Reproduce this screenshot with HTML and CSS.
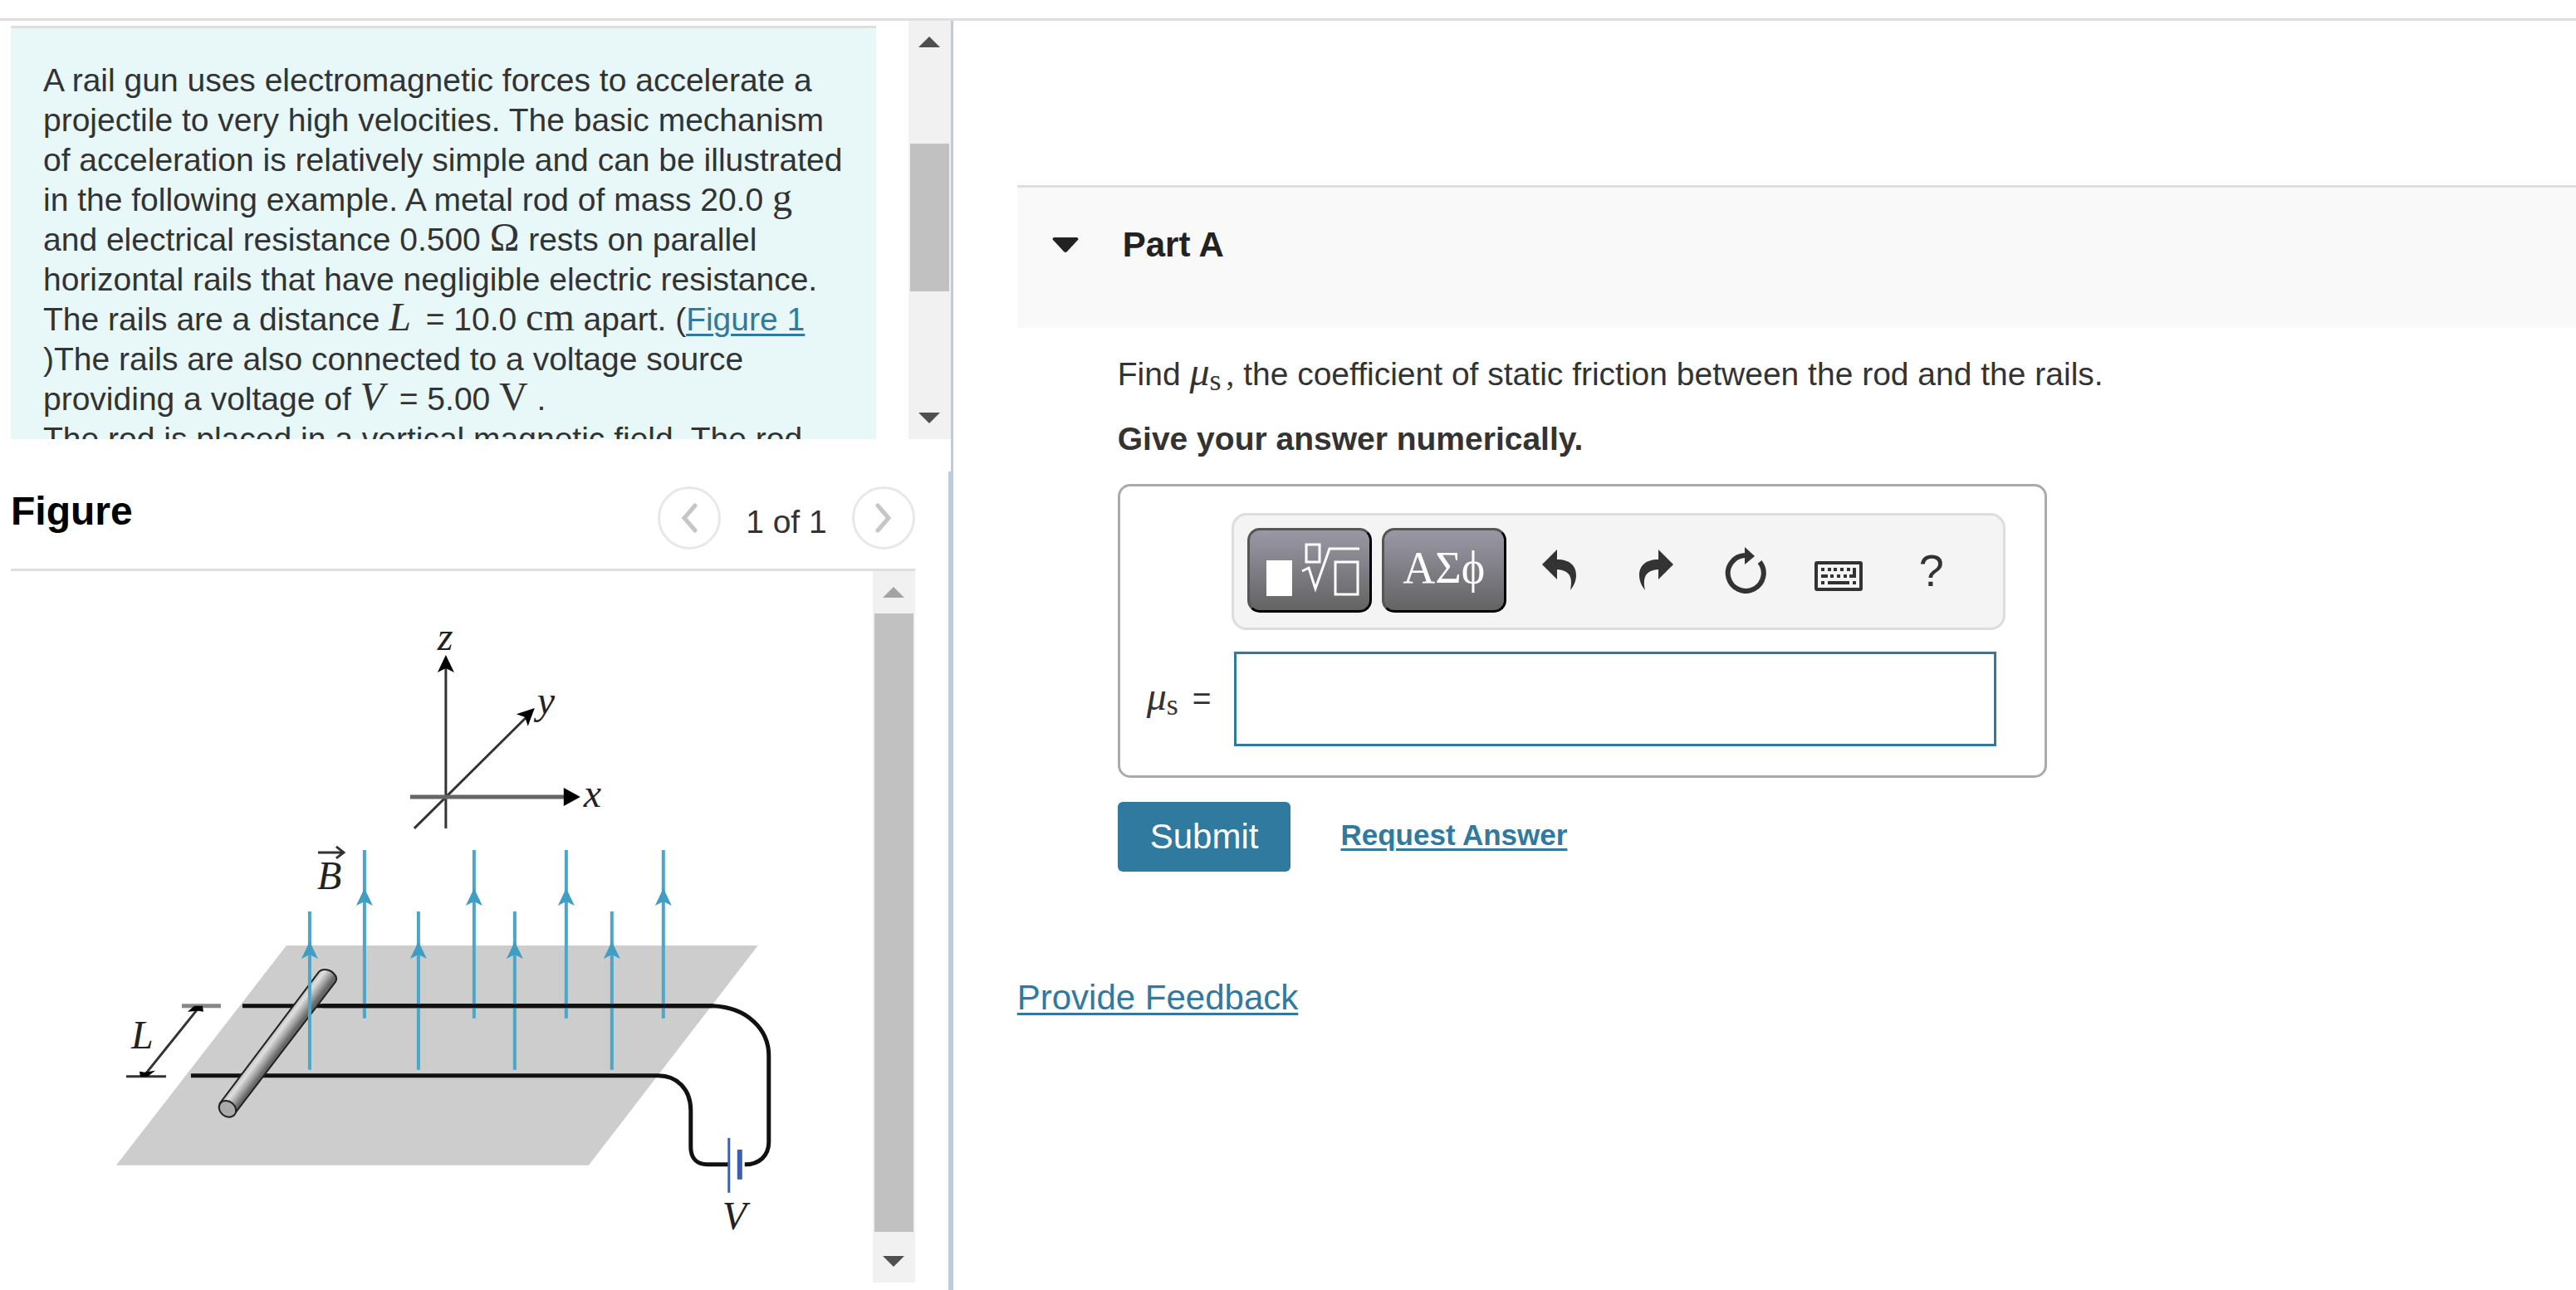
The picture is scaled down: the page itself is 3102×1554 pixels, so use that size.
FILE: index.html
```html
<!DOCTYPE html>
<html lang="en">
<head>
    <meta charset="UTF-8">
    <meta name="viewport" content="width=device-width, initial-scale=1.0">
    <title>Rail Gun - Part A</title>
    <link rel="stylesheet" href="styles.css">
</head>
<body>
    <header class="topbar"></header>
    <div class="container">
        <aside class="left">
            <section class="intro">
                <div class="intro-text">
                    <p>A rail gun uses electromagnetic forces to accelerate a projectile to very high velocities. The basic mechanism of acceleration is relatively simple and can be illustrated in the following example. A metal rod of mass 20.0 <span class="math">g</span> and electrical resistance 0.500 <span class="math">Ω</span> rests on parallel horizontal rails that have negligible electric resistance. The rails are a distance <i class="math">L</i> = 10.0 <span class="math">cm</span> apart. (<a href="#figure">Figure 1</a><br>)The rails are also connected to a voltage source providing a voltage of <i class="math">V</i> = 5.00 <span class="math">V</span> .</p>
                    <p>The rod is placed in a vertical magnetic field. The rod</p>
                </div>
                <div class="scrollbar">
                    <span class="arrow up"></span>
                    <div class="track"><div class="thumb"></div></div>
                    <span class="arrow down"></span>
                </div>
            </section>

            <section class="figure" id="figure">
                <div class="figure-header">
                    <h2>Figure</h2>
                    <div class="pager">
                        <button type="button" aria-label="Previous figure">
                            <svg width="20" height="36" viewBox="0 0 20 36"><path d="M17 3L4 18L17 33"/></svg>
                        </button>
                        <span>1 of 1</span>
                        <button type="button" aria-label="Next figure">
                            <svg width="20" height="36" viewBox="0 0 20 36"><path d="M3 3L16 18L3 33"/></svg>
                        </button>
                    </div>
                </div>
                <div class="figure-body">
                    <svg class="diagram" viewBox="13 688 1038 857" preserveAspectRatio="xMinYMin meet">
                        <defs>
                            <linearGradient id="rod" gradientUnits="userSpaceOnUse" x1="325" y1="1248" x2="341" y2="1260">
                                <stop offset="0" stop-color="#b8b8b8"/>
                                <stop offset="0.3" stop-color="#e0e0e0"/>
                                <stop offset="0.6" stop-color="#b0b0b0"/>
                                <stop offset="1" stop-color="#666"/>
                            </linearGradient>
                            <path id="head" d="M0 0L10 21L0 16L-10 21Z"/>
                        </defs>

                        <!-- axes -->
                        <g class="axis">
                            <path d="M537 998V800"/>
                            <path d="M499 998L636 862"/>
                            <path class="thick" d="M494 960H685"/>
                        </g>
                        <use href="#head" transform="translate(537 789)"/>
                        <use href="#head" transform="translate(644 853) rotate(46)"/>
                        <path d="M699 960L679 949V971Z"/>
                        <text x="527" y="783">z</text>
                        <text x="647" y="860">y</text>
                        <text x="703" y="972">x</text>

                        <!-- plate and rails -->
                        <path class="plate" d="M345 1139H913L709 1404H140Z"/>
                        <path class="wire" d="M292 1212H859C900 1214 926 1240 926 1272V1376C926 1392 915 1403 897 1403"/>
                        <path class="wire" d="M230 1296H793C815 1296 832 1312 832 1338V1382C832 1396 840 1403 852 1403H877"/>

                        <!-- rod -->
                        <path class="rod" d="M265 1329L384 1171C387 1167 395 1167 400 1171C406 1176 406 1180 404 1183L284 1340Z"/>
                        <ellipse class="rod-end" cx="274" cy="1336" rx="11" ry="9" transform="rotate(40 274 1336)"/>

                        <!-- magnetic field -->
                        <g class="field">
                            <path d="M439 1024V1227M571 1024V1227M682 1024V1227M799 1024V1227"/>
                            <path d="M373 1098V1289M504 1098V1289M620 1098V1289M737 1098V1289"/>
                        </g>
                        <g class="field-heads">
                            <use href="#head" x="439" y="1070"/>
                            <use href="#head" x="571" y="1070"/>
                            <use href="#head" x="682" y="1070"/>
                            <use href="#head" x="799" y="1070"/>
                            <use href="#head" x="373" y="1134"/>
                            <use href="#head" x="504" y="1134"/>
                            <use href="#head" x="620" y="1134"/>
                            <use href="#head" x="737" y="1134"/>
                        </g>
                        <path class="front" d="M388 1212H859"/>
                        <path class="axis" d="M383 1027H413M405 1020L414 1027L405 1034"/>
                        <text x="382" y="1071">B</text>

                        <!-- distance L -->
                        <path class="bar" d="M219 1212H266"/>
                        <path class="axis" d="M152 1297H200M176 1293L237 1217"/>
                        <path d="M244 1212L245 1219L239 1218L226 1219L234 1212Z"/>
                        <path d="M169 1297L168 1291L174 1292L187 1290L178 1297Z"/>
                        <text x="158" y="1263">L</text>

                        <!-- battery -->
                        <path class="battery" d="M878 1371V1437"/>
                        <path class="battery short" d="M891 1385V1421"/>
                        <text x="870" y="1481">V</text>
                    </svg>
                    <div class="scrollbar full">
                        <span class="arrow up off"></span>
                        <div class="track"><div class="thumb"></div></div>
                        <span class="arrow down"></span>
                    </div>
                </div>
            </section>
        </aside>

        <main class="right">
            <div class="part-header">
                <svg width="32" height="18" viewBox="0 0 32 18"><path d="M2 0H30Q33 2 30 4L18 17Q16 19 14 17L2 4Q-1 2 2 0Z"/></svg>
                <h2>Part A</h2>
            </div>
            <form class="part-body">
                <p>Find <span class="math"><i>μ</i><sub>s</sub></span><span class="comma">,</span> the coefficient of static friction between the rod and the rails.</p>
                <p><b>Give your answer numerically.</b></p>
                <div class="answer">
                    <div class="toolbar">
                        <button type="button" class="dark" aria-label="Templates">
                            <svg width="112" height="66" viewBox="0 0 112 66">
                                <path fill="#fff" stroke="none" d="M0 21H31V64H0Z"/>
                                <path d="M48 2H64V23H48ZM83 23H110V62H83Z"/>
                                <path d="M43 34L51 30L59 55L76 7H112"/>
                            </svg>
                        </button>
                        <button type="button" class="dark">ΑΣϕ</button>
                        <div class="tools">
                            <button type="button" aria-label="Undo">
                                <svg width="42" height="50" viewBox="0 0 42 50"><path d="M0 18L18 0V12C34 12 41 20 41 31C41 38 38 44 34 49C37 34 34 25 18 24V36Z"/></svg>
                            </button>
                            <button type="button" aria-label="Redo">
                                <svg class="redo" width="50" height="50" viewBox="0 0 50 50"><path d="M50 18L32 0V12C16 12 9 20 9 31C9 38 12 44 16 49C13 34 16 25 32 24V36Z"/></svg>
                            </button>
                            <button type="button" aria-label="Reset">
                                <svg width="50" height="56" viewBox="0 0 50 56"><path class="ring" d="M24 10A21.500 21.500 0 1 0 42 18"/><path d="M24 0L36 11L24 21Z"/></svg>
                            </button>
                            <button type="button" aria-label="Keyboard shortcuts">
                                <svg class="keys" width="58" height="36" viewBox="0 0 58 36"><path fill-rule="evenodd" d="M3 0H55Q58 0 58 3V33Q58 36 55 36H3Q0 36 0 33V3Q0 0 3 0ZM4 4V32H54V4ZM8 8H12V12H8ZM16 8H20V12H16ZM23 8H27V12H23ZM31 8H35V12H31ZM39 8H43V12H39ZM46 8H50V20H42V16H46ZM8 16H16V20H8ZM19 16H23V20H19ZM27 16H31V20H27ZM35 16H39V20H35ZM8 24H12V28H8ZM16 24H42V28H16ZM46 24H50V28H46Z"/></svg>
                            </button>
                            <button type="button" aria-label="Help">?</button>
                        </div>
                    </div>
                    <label for="mu"><span class="math"><i>μ</i><sub>s</sub></span> =</label>
                    <input type="text" id="mu" name="mu">
                </div>
                <div class="actions">
                    <button type="submit">Submit</button>
                    <a href="#">Request Answer</a>
                </div>
            </form>
            <a class="feedback" href="#">Provide Feedback</a>
        </main>
    </div>
</body>
</html>
```
FILE: styles.css
```css
* {
    box-sizing: border-box;
}
body {
    margin: 0;
    font-family: "Liberation Sans", Arial, sans-serif;
    font-size: 39px;
    line-height: 48px;
    color: #333;
    background: #fff;
}
h2, p {
    margin: 0;
}
button {
    font-family: inherit;
    cursor: pointer;
}
a {
    color: #30799f;
    text-underline-offset: 4px;
    text-decoration-thickness: 3px;
}
.topbar {
    height: 25px;
    border-bottom: 3px solid #dedede;
}
.container {
    display: grid;
    grid-template-columns: 37% 1fr;
    min-height: calc(100vh - 25px);
}
.math, .comma {
    font-family: "Liberation Serif", "Times New Roman", serif;
    font-size: 48px;
    line-height: 40px;
}
i.math {
    margin-right: 7px;
}
.math sub {
    font-size: 36px;
    line-height: 24px;
    vertical-align: -6px;
}
.comma {
    font-size: 39px;
    margin-left: 6px;
}

/* left column */
.left {
    display: flex;
    flex-direction: column;
}
.intro {
    display: flex;
    gap: 39px;
    padding: 0 0 39px 13px;
    border-right: 3px solid #bccbdf;
}
.intro-text {
    flex: 1;
    height: 498px;
    margin-top: 6px;
    padding: 39px 36px 0 39px;
    border-top: 3px solid #dedede;
    background: #e8f7f7;
    overflow: hidden;
}
.scrollbar {
    display: flex;
    flex-direction: column;
    width: 51px;
    background: #f1f1f1;
}
.arrow {
    display: flex;
    align-items: center;
    justify-content: center;
    height: 51px;
}
.arrow::before {
    content: "";
    border: 13px solid transparent;
}
.arrow.up::before {
    border-top: 0;
    border-bottom-color: #505050;
}
.arrow.down::before {
    border-bottom: 0;
    border-top-color: #505050;
}
.arrow.off::before {
    border-bottom-color: #a3a3a3;
}
.track {
    flex: 1;
    padding: 97px 2px 0;
}
.thumb {
    height: 178px;
    background: #c1c1c1;
}
.full .track {
    padding: 0 2px 10px;
}
.full .thumb {
    height: 100%;
}

/* figure */
.figure {
    flex: 1;
    padding: 0 40px 9px 13px;
    border-right: 6px solid #bccbdf;
}
.figure-header {
    display: flex;
    justify-content: space-between;
    padding: 18px 0 23px;
    border-bottom: 3px solid #dedede;
}
.figure-header h2 {
    font-size: 48px;
    line-height: 60px;
    color: #000;
}
.pager {
    display: flex;
    align-items: center;
    gap: 30px;
    font-size: 39px;
}
.pager span {
    padding-top: 10px;
}
.pager button {
    display: flex;
    align-items: center;
    justify-content: center;
    width: 76px;
    height: 76px;
    padding: 0;
    border: 3px solid #e8e8e8;
    border-radius: 50%;
    background: #fff;
}
.pager path {
    fill: none;
    stroke: #c6c6c6;
    stroke-width: 5;
    stroke-linecap: round;
}
.figure-body {
    display: flex;
    height: 857px;
}
.diagram {
    flex: 1;
    min-width: 0;
    height: 100%;
}
.diagram text {
    font-family: "Liberation Serif", "Times New Roman", serif;
    font-style: italic;
    font-size: 48px;
    fill: #222;
}
.axis, .bar {
    fill: none;
    stroke: #333;
    stroke-width: 3;
}
.axis .thick {
    stroke: #666;
    stroke-width: 5;
}
.bar {
    stroke: #888;
    stroke-width: 5;
}
.plate {
    fill: #cdcdcd;
}
.wire, .front {
    fill: none;
    stroke: #111;
    stroke-width: 5;
}
.rod {
    fill: url(#rod);
    stroke: #222;
    stroke-width: 2;
}
.rod-end {
    fill: #aaa;
    stroke: #222;
    stroke-width: 2;
}
.field {
    fill: none;
    stroke: #4ba6c8;
    stroke-width: 4;
}
.field-heads {
    fill: #409dc3;
}
.battery {
    stroke: #3c5fae;
    stroke-width: 3;
}
.battery.short {
    stroke-width: 6;
}

/* right column */
.right {
    padding: 198px 0 0 77px;
}
.part-header {
    display: flex;
    align-items: center;
    gap: 53px;
    height: 172px;
    padding: 0 0 31px 42px;
    border-top: 3px solid #dedede;
    background: #f9f9f9;
}
.part-header h2 {
    font-size: 42px;
    color: #222;
}
.part-header svg {
    fill: #222;
}
.part-body {
    padding: 32px 0 0 121px;
}
.part-body p {
    margin-bottom: 30px;
}
.answer {
    display: grid;
    grid-template-columns: 134px 1fr;
    row-gap: 26px;
    width: 1119px;
    padding: 32px 47px 35px 0;
    border: 3px solid #aaa;
    border-radius: 15px;
}
.toolbar {
    grid-column: 2;
    display: flex;
    gap: 12px;
    padding: 15px 16px 18px;
    border: 3px solid #ddd;
    border-radius: 18px;
    background: #f4f4f4;
}
.dark {
    width: 150px;
    height: 102px;
    padding: 0 0 6px;
    border: 3px solid;
    border-color: #555 #000 #000 #555;
    border-radius: 15px;
    background: linear-gradient(#9b98a6, #636363);
    color: #fff;
    font-family: "Liberation Serif", "Times New Roman", serif;
    font-size: 54px;
}
.dark svg {
    display: block;
    margin: 6px 0 0 20px;
    fill: none;
    stroke: #fff;
    stroke-width: 3;
}
.tools {
    display: flex;
    margin-left: -4px;
}
.tools button {
    display: flex;
    align-items: center;
    justify-content: center;
    width: 112px;
    padding: 0;
    border: 0;
    background: none;
    color: #333;
    font-size: 54px;
}
.tools svg {
    fill: #333;
}
.tools .keys {
    margin-top: 14px;
}
.ring {
    fill: none;
    stroke: #333;
    stroke-width: 6;
}
.answer label {
    align-self: center;
    padding-left: 32px;
}
.answer label .math {
    margin-right: 6px;
}
.answer input {
    height: 114px;
    margin: 0 11px 0 3px;
    padding: 0 20px;
    border: 3px solid #30799f;
    font-size: 42px;
}
.actions {
    display: flex;
    align-items: center;
    gap: 60px;
    margin-top: 29px;
}
.actions button {
    padding: 18px 39px;
    border: 0;
    border-radius: 6px;
    background: #30799f;
    color: #fff;
    font-size: 42px;
    line-height: 48px;
}
.actions a {
    padding-bottom: 4px;
    font-size: 35px;
    font-weight: bold;
}
.feedback {
    display: inline-block;
    margin-top: 128px;
    font-size: 42px;
}
```
